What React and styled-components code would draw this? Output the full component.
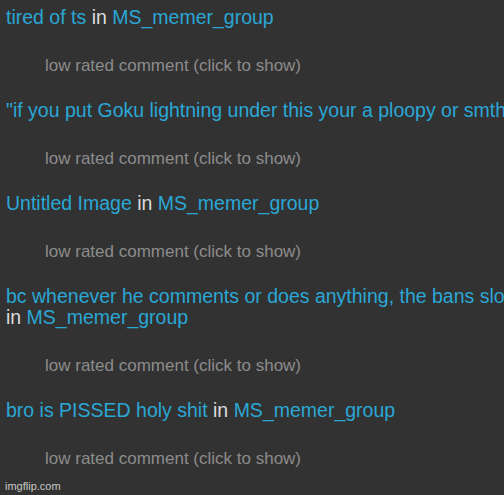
import React from "react";
import styled, { createGlobalStyle } from "styled-components";

const GlobalStyle = createGlobalStyle`
  html, body {
    margin: 0;
    padding: 0;
    background: #323232;
    overflow: hidden;
  }
  * {
    box-sizing: border-box;
  }
`;

const Page = styled.div`
  width: 504px;
  height: 495px;
  position: relative;
  padding: 7px 0 0 6px;
  font-family: "Liberation Sans", Arial, sans-serif;
  background: #323232;
`;

const Item = styled.div`
  display: flex;
  flex-direction: column;
`;

const Title = styled.div`
  font-size: 19.5px;
  line-height: 21px;
  color: #dcdcdc;
`;

const Link = styled.a`
  color: #2aa7d6;
  text-decoration: none;
  white-space: nowrap;
  cursor: pointer;
`;

const LowRated = styled.div`
  margin: 28px 0 24px 39px;
  font-size: 17px;
  line-height: 20px;
  color: #8c8c8c;
  cursor: pointer;
`;

const Watermark = styled.div`
  position: absolute;
  left: 5px;
  bottom: 3px;
  font-size: 11px;
  color: #c8c8c8;
`;

const items = [
  { title: "tired of ts", group: "MS_memer_group" },
  { title: "\"if you put Goku lightning under this your a ploopy or smth\"" },
  { title: "Untitled Image", group: "MS_memer_group" },
  {
    title: "bc whenever he comments or does anything, the bans slow down",
    group: "MS_memer_group",
  },
  { title: "bro is PISSED holy shit", group: "MS_memer_group" },
];

function App() {
  return (
    <>
      <GlobalStyle />
      <Page>
        {items.map((it, i) => (
          <Item key={i}>
            <Title>
              <Link>{it.title}</Link>
              {it.group && (
                <>
                  {" "}in <Link>{it.group}</Link>
                </>
              )}
            </Title>
            <LowRated>low rated comment (click to show)</LowRated>
          </Item>
        ))}
        <Watermark>imgflip.com</Watermark>
      </Page>
    </>
  );
}

export default App;
